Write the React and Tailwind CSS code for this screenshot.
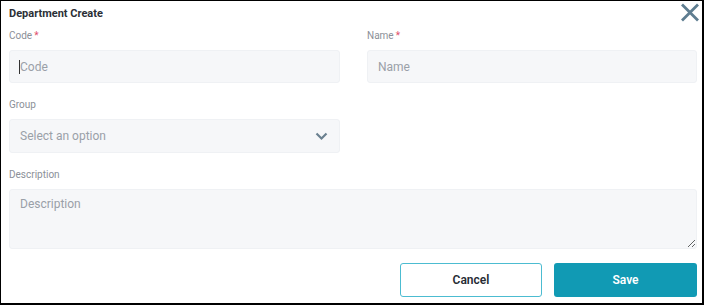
import React from 'react';

const FONT = { fontFamily: 'Roboto, "Liberation Sans", sans-serif' };

function Label({ children, required }) {
  return (
    <div className="h-[14px] text-[10px] leading-[14px] text-[#8b9098] mb-[7px]">
      {children}
      {required && <span className="text-[#e0506b] ml-[2px]">*</span>}
    </div>
  );
}

export default function App() {
  return (
    <div
      style={FONT}
      className="w-[704px] h-[305px] bg-white border-l border-t border-r-2 border-b-2 border-black pl-[8px] pr-[5px] flex flex-col"
    >
      <div className="flex items-start justify-between h-[28px]">
        <div className="pt-[6px] text-[11px] leading-[14px] font-bold text-[#2b2f36]">Department Create</div>
        <svg width="20" height="19" viewBox="0 0 20 19" className="mt-[2px] -mr-[3px]">
          <path d="M2 1.5 L18 17.5 M18 1.5 L2 17.5" stroke="#5e7d90" strokeWidth="2.8" fill="none" />
        </svg>
      </div>

      <div className="grid grid-cols-[331px_330px] gap-x-[27px]">
        <div>
          <Label required>Code</Label>
          <div className="h-[33px] rounded-[3px] bg-[#f6f7f9] border border-[#eff1f4] flex items-center pl-[9px] text-[12px] text-[#9aa0a8]">
            <span className="w-px h-[14px] bg-[#333]" />
            <span>Code</span>
          </div>
        </div>
        <div>
          <Label required>Name</Label>
          <div className="h-[33px] rounded-[3px] bg-[#f6f7f9] border border-[#eff1f4] flex items-center pl-[10px] text-[12px] text-[#9aa0a8]">
            Name
          </div>
        </div>
      </div>

      <div className="mt-[15px] w-[331px]">
        <Label>Group</Label>
        <div className="h-[34px] rounded-[3px] bg-[#f6f7f9] border border-[#eff1f4] flex items-center justify-between pl-[10px] pr-[11px] text-[12px] text-[#9aa0a8]">
          <span>Select an option</span>
          <svg width="13" height="9" viewBox="0 0 13 9">
            <path d="M1.5 1.5 L6.5 6.5 L11.5 1.5" stroke="#6b8090" strokeWidth="2.2" fill="none" />
          </svg>
        </div>
      </div>

      <div className="mt-[15px]">
        <Label>Description</Label>
        <textarea
          placeholder="Description"
          className="block w-full h-[60px] rounded-[3px] bg-[#f6f7f9] border border-[#eff1f4] px-[10px] py-[5px] text-[12px] text-[#333] placeholder:text-[#9aa0a8] outline-none"
        />
      </div>

      <div className="mt-[14px] flex justify-end gap-[12px]">
        <button
          type="button"
          className="w-[142px] h-[34px] rounded-[3px] border-[1.5px] border-[#4cbcd1] bg-white text-[12px] font-semibold text-[#262b33]"
        >
          Cancel
        </button>
        <button
          type="button"
          className="w-[143px] h-[34px] rounded-[3px] bg-[#119ab4] text-[12px] font-semibold text-white"
        >
          Save
        </button>
      </div>
    </div>
  );
}
